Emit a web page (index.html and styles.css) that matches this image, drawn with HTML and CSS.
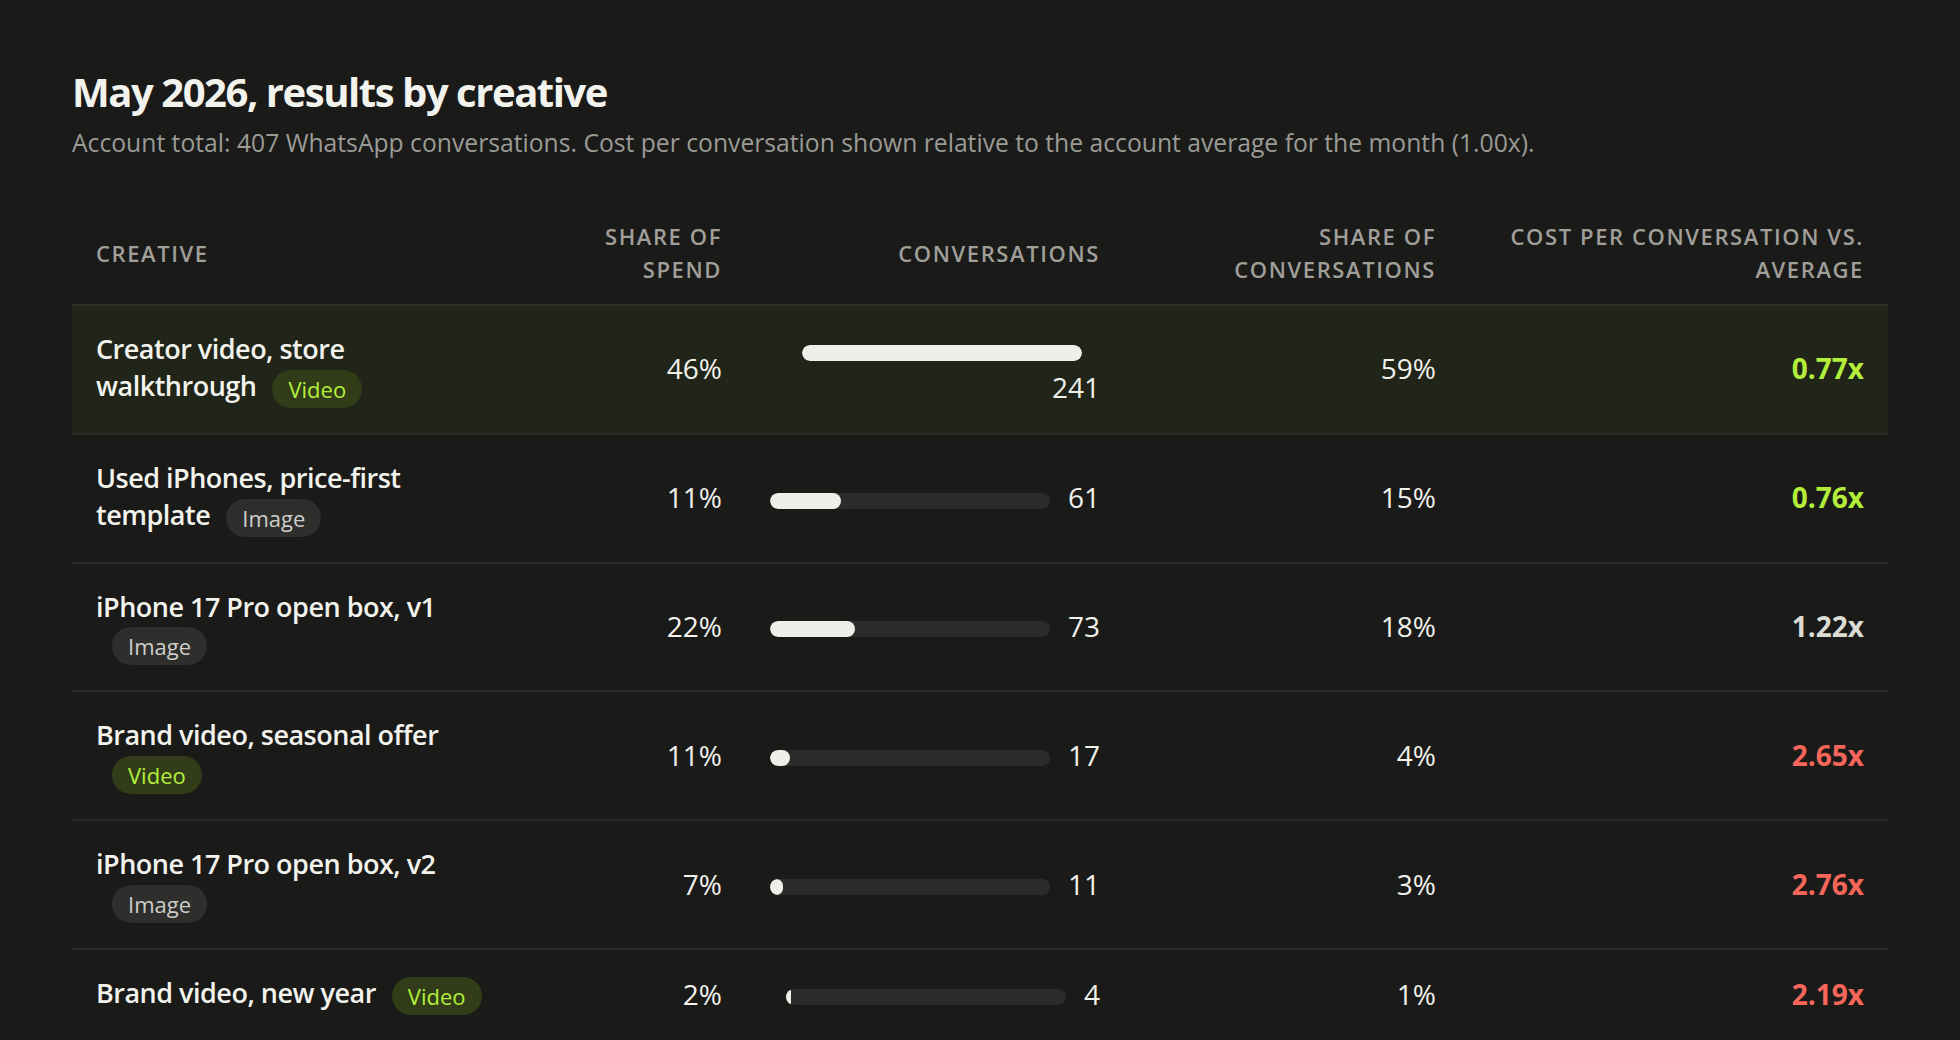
FILE: index.html
```html
<!DOCTYPE html>
<html lang="en">
<head>
<meta charset="utf-8">
<title>May 2026, results by creative</title>
<link rel="stylesheet" href="styles.css">
</head>
<body>
<main class="page">
  <h1 class="title">May 2026, results by creative</h1>
  <p class="subtitle">Account total: 407 WhatsApp conversations. Cost per conversation shown relative to the account average for the month (1.00x).</p>
  <table class="results">
    <colgroup>
      <col class="col-creative">
      <col class="col-spend">
      <col class="col-conv">
      <col class="col-share">
      <col class="col-cost">
    </colgroup>
    <thead>
      <tr>
        <th class="th-left">Creative</th>
        <th>Share of spend</th>
        <th>Conversations</th>
        <th>Share of conversations</th>
        <th>Cost per conversation vs. average</th>
      </tr>
    </thead>
    <tbody>
      <tr class="row-top">
        <td class="name">Creator video, store walkthrough<span class="tag tag-video">Video</span></td>
        <td class="num">46%</td>
        <td class="conv"><span class="bar"><span class="fill" style="width:100%"></span></span>241</td>
        <td class="num">59%</td>
        <td class="cost good">0.77x</td>
      </tr>
      <tr>
        <td class="name">Used iPhones, price-first template<span class="tag tag-image">Image</span></td>
        <td class="num">11%</td>
        <td class="conv"><span class="bar"><span class="fill" style="width:25.3%"></span></span>61</td>
        <td class="num">15%</td>
        <td class="cost good">0.76x</td>
      </tr>
      <tr>
        <td class="name">iPhone 17 Pro open box, v1<span class="tag tag-image">Image</span></td>
        <td class="num">22%</td>
        <td class="conv"><span class="bar"><span class="fill" style="width:30.3%"></span></span>73</td>
        <td class="num">18%</td>
        <td class="cost neutral">1.22x</td>
      </tr>
      <tr>
        <td class="name">Brand video, seasonal offer<span class="tag tag-video">Video</span></td>
        <td class="num">11%</td>
        <td class="conv"><span class="bar"><span class="fill" style="width:7.05%"></span></span>17</td>
        <td class="num">4%</td>
        <td class="cost bad">2.65x</td>
      </tr>
      <tr>
        <td class="name">iPhone 17 Pro open box, v2<span class="tag tag-image">Image</span></td>
        <td class="num">7%</td>
        <td class="conv"><span class="bar"><span class="fill" style="width:4.56%"></span></span>11</td>
        <td class="num">3%</td>
        <td class="cost bad">2.76x</td>
      </tr>
      <tr>
        <td class="name">Brand video, new year<span class="tag tag-video">Video</span></td>
        <td class="num">2%</td>
        <td class="conv"><span class="bar"><span class="fill" style="width:1.66%"></span></span>4</td>
        <td class="num">1%</td>
        <td class="cost bad">2.19x</td>
      </tr>
    </tbody>
  </table>
</main>
</body>
</html>
```

FILE: styles.css
```css
html, body {
  margin: 0;
  background: #1a1a19;
}

body {
  font-family: "Open Sans", "Noto Sans", sans-serif;
  color: #f1f1ec;
}

.page {
  padding: 68px 72px 40px;
}

.title {
  margin: 0;
  font-size: 40px;
  line-height: 48px;
  font-weight: 700;
  color: #f3f3ee;
  letter-spacing: -1.45px;
}

.subtitle {
  margin: 10px 0 0;
  font-size: 24.7px;
  line-height: 34px;
  color: #9b9b96;
}

.results {
  width: 100%;
  margin-top: 42px;
  border-collapse: collapse;
  table-layout: fixed;
}

.col-creative { width: 448px; }
.col-spend { width: 226px; }
.col-conv { width: 378px; }
.col-share { width: 336px; }
.col-cost { width: 428px; }

.results th {
  padding: 18px 24px;
  font-size: 22px;
  line-height: 33px;
  font-weight: 600;
  letter-spacing: 1.6px;
  text-transform: uppercase;
  color: #a09f99;
  text-align: right;
  vertical-align: middle;
  border-bottom: 2px solid #2e2e2c;
}

.results th.th-left {
  text-align: left;
}

.results td {
  padding: 24px 24px 25px;
  font-size: 28px;
  line-height: 37px;
  vertical-align: middle;
  border-bottom: 2px solid #2a2a28;
}

.row-top td {
  background: #212418;
}

.results td.name {
  font-size: 27px;
  font-weight: 600;
  letter-spacing: -0.5px;
  color: #f3f3ee;
}

.tag {
  display: inline-block;
  margin-left: 16px;
  padding: 0 16px;
  height: 38px;
  line-height: 38px;
  border-radius: 19px;
  font-size: 22px;
  font-weight: 500;
  letter-spacing: 0;
  vertical-align: middle;
}

.tag-video {
  background: #323c19;
  color: #b3ef3a;
}

.tag-image {
  background: #2e2e2d;
  color: #cfcfca;
}

.num {
  text-align: right;
  color: #f1f1ec;
}

.results td.conv {
  padding-left: 20px;
  text-align: right;
  color: #f1f1ec;
}

.bar {
  display: inline-block;
  width: 280px;
  height: 16px;
  margin-right: 18px;
  border-radius: 8px;
  background: #2b2b2a;
  vertical-align: middle;
  overflow: hidden;
}

.fill {
  display: block;
  height: 100%;
  border-radius: 8px;
  background: #efefea;
}

.cost {
  text-align: right;
  font-weight: 700;
}

.good { color: #b3ef3a; }
.neutral { color: #dcdcd6; }
.bad { color: #f7665a; }
```
